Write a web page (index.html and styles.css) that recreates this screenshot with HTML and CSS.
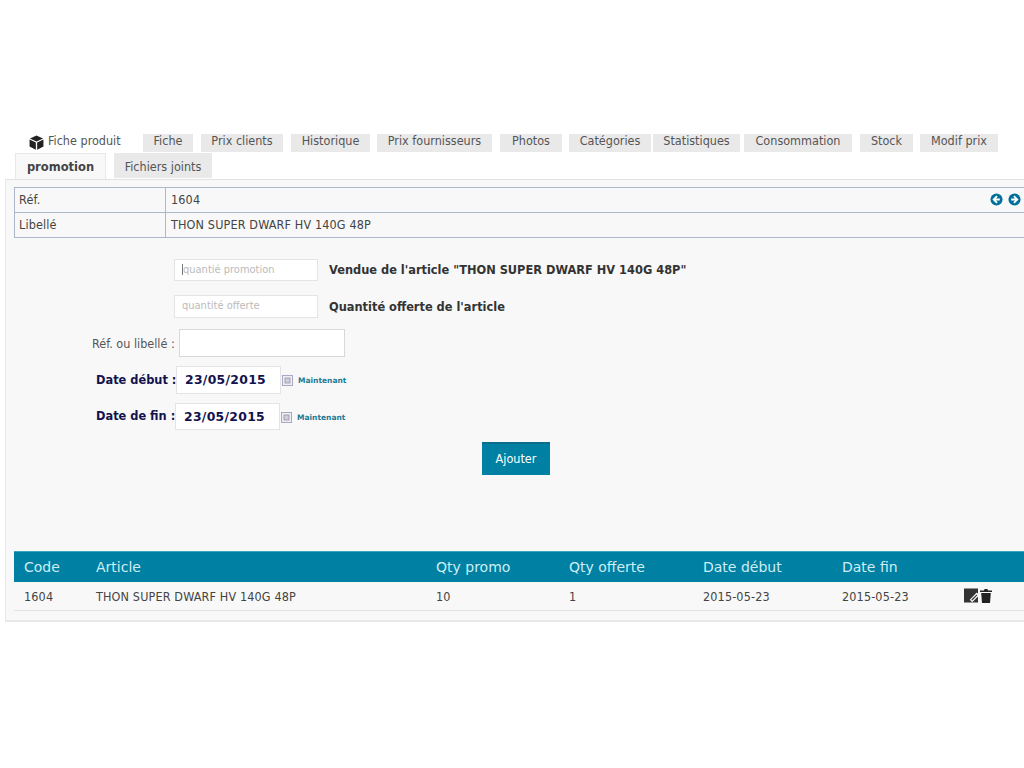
FILE: index.html
```html
<!DOCTYPE html>
<html lang="fr">
<head>
<meta charset="utf-8">
<title>Fiche produit</title>
<link rel="stylesheet" href="styles.css">
</head>
<body>
<div class="page">
  <div class="tabs">
    <div class="tab-title">
      <svg class="box" viewBox="0 0 16 16"><path d="M8 .5 15 3.6 8 6.8 1 3.6Z" fill="#222"/><path d="M.6 4.8 7.3 7.9V15.6L.6 12.2Z" fill="#222"/><path d="M15.4 4.8 8.7 7.9V15.6L15.4 12.2Z" fill="#222"/></svg>
      <span>Fiche produit</span>
    </div>
    <a class="tab t-fiche">Fiche</a>
    <a class="tab t-prix">Prix clients</a>
    <a class="tab t-hist">Historique</a>
    <a class="tab t-four">Prix fournisseurs</a>
    <a class="tab t-phot">Photos</a>
    <a class="tab t-cat">Catégories</a>
    <a class="tab t-stat">Statistiques</a>
    <a class="tab t-cons">Consommation</a>
    <a class="tab t-stock">Stock</a>
    <a class="tab t-modif">Modif prix</a>
    <div class="break"></div>
    <a class="tab-active">promotion</a>
    <a class="tab t-joint">Fichiers joints</a>
  </div>
  <div class="panel">
    <table class="info">
      <colgroup><col class="info-c1"><col></colgroup>
      <tr>
        <td>Réf.</td>
        <td>
          <div class="ref-line">
            <span>1604</span>
            <span class="arrows">
              <svg class="arrow" viewBox="0 0 14 14"><circle cx="7" cy="7" r="6.5" fill="#00709a"/><path d="M7.6 3.4 4 7l3.6 3.6M4.4 7H10.6" stroke="#fff" stroke-width="2" fill="none"/></svg>
              <svg class="arrow" viewBox="0 0 14 14"><circle cx="7" cy="7" r="6.5" fill="#00709a"/><path d="M6.4 3.4 10 7l-3.6 3.6M9.6 7H3.4" stroke="#fff" stroke-width="2" fill="none"/></svg>
            </span>
          </div>
        </td>
      </tr>
      <tr><td>Libellé</td><td class="lib-val">THON SUPER DWARF HV 140G 48P</td></tr>
    </table>

    <form class="form">
      <div class="row row-qty1">
        <input class="input input-qty input-caret" placeholder="quantié promotion">
        <strong class="qty-label">Vendue de l'article "THON SUPER DWARF HV 140G 48P"</strong>
      </div>
      <div class="row row-qty2">
        <input class="input input-qty" placeholder="quantité offerte">
        <strong class="qty-label">Quantité offerte de l'article</strong>
      </div>
      <div class="row row-ref">
        <label class="ref-label">Réf. ou libellé :</label>
        <input class="input input-ref">
      </div>
      <div class="row row-date1">
        <label class="date-label">Date début :</label>
        <input class="input input-date" value="23/05/2015">
        <svg class="cal" viewBox="0 0 11 11"><rect x=".5" y=".5" width="10" height="10" fill="#eeeef4" stroke="#a8a8c0"/><rect x="3" y="3" width="5" height="5" fill="#d0d0dc" stroke="#8888a0" stroke-width=".7"/></svg>
        <a class="now">Maintenant</a>
      </div>
      <div class="row row-date2">
        <label class="date-label">Date de fin :</label>
        <input class="input input-date" value="23/05/2015">
        <svg class="cal" viewBox="0 0 11 11"><rect x=".5" y=".5" width="10" height="10" fill="#eeeef4" stroke="#a8a8c0"/><rect x="3" y="3" width="5" height="5" fill="#d0d0dc" stroke="#8888a0" stroke-width=".7"/></svg>
        <a class="now">Maintenant</a>
      </div>
      <div class="row-btn"><button type="button" class="btn">Ajouter</button></div>
    </form>

    <table class="data">
      <colgroup>
        <col class="c-code"><col class="c-art"><col class="c-qp"><col class="c-qo"><col class="c-dd"><col class="c-df"><col class="c-act">
      </colgroup>
      <thead>
        <tr><th>Code</th><th>Article</th><th>Qty promo</th><th>Qty offerte</th><th>Date début</th><th>Date fin</th><th></th></tr>
      </thead>
      <tbody>
        <tr>
          <td>1604</td><td>THON SUPER DWARF HV 140G 48P</td><td>10</td><td>1</td><td>2015-05-23</td><td>2015-05-23</td>
          <td>
            <div class="actions">
              <svg class="act" viewBox="0 0 14 15"><rect y=".5" width="14" height="14" fill="#333"/><path d="M7 13 14 5.8" stroke="#f7f7f7" stroke-width="3.6" fill="none"/><path d="M7.8 12 13 6.8" stroke="#333" stroke-width="1.1" fill="none"/></svg>
              <svg class="trash" viewBox="0 0 12 15"><path d="M0 2.6H4L4.6 1H7.4L8 2.6H12V4H0Z" fill="#222"/><path d="M1.2 5H10.8L10 15H2Z" fill="#222"/></svg>
            </div>
          </td>
        </tr>
      </tbody>
    </table>
  </div>
</div>
</body>
</html>
```

FILE: styles.css
```css
* { box-sizing: border-box; }
html, body { margin: 0; padding: 0; background: #fff; }
body {
  width: 1024px;
  height: 768px;
  overflow: hidden;
  font-family: "DejaVu Sans Condensed", "DejaVu Sans", Verdana, sans-serif;
  font-size: 12.5px;
  color: #444;
}
.page { padding-top: 134px; }

/* tabs */
.tabs {
  display: flex;
  flex-wrap: wrap;
  padding-left: 15px;
  width: 1024px;
}
.break { flex-basis: 100%; height: 1px; }
.tab-title {
  display: flex;
  align-items: flex-start;
  gap: 4px;
  height: 18px;
  width: 128px;
  padding-left: 14px;
  line-height: 14px;
  color: #555;
  white-space: nowrap;
}
.box { width: 15px; height: 15px; margin-top: 1px; }
.tab, .tab-active { display: block; white-space: nowrap; text-align: center; }
.tab {
  height: 18px;
  line-height: 14px;
  background: #e9e9e9;
  color: #555;
}
.t-fiche { width: 50px; margin-right: 8px; }
.t-prix { width: 82px; margin-right: 8px; }
.t-hist { width: 79px; margin-right: 7px; }
.t-four { width: 115px; margin-right: 8px; }
.t-phot { width: 62px; margin-right: 7px; }
.t-cat { width: 82px; margin-right: 2px; }
.t-stat { width: 87px; margin-right: 4px; }
.t-cons { width: 108px; margin-right: 8px; }
.t-stock { width: 53px; margin-right: 7px; }
.t-modif { width: 78px; }
.tab-active {
  width: 91px;
  height: 26px;
  line-height: 27px;
  margin-right: 8px;
  background: #f8f8f8;
  border: 1px solid #e8e8e8;
  border-bottom: 0;
  color: #444;
  font-family: "DejaVu Sans", Verdana, sans-serif;
  font-weight: 700;
  font-size: 11.5px;
}
.t-joint { width: 98px; height: 25px; line-height: 27px; }

/* panel */
.panel {
  margin-left: 5px;
  width: 1040px;
  height: 443px;
  padding: 7px 0 0 8px;
  background: #f8f8f8;
  border-top: 1px solid #e2e2e2;
  border-left: 1px solid #e8e8e8;
  border-bottom: 2px solid #e8e8e8;
}

/* info table */
.info {
  width: 1012px;
  border-collapse: collapse;
  table-layout: fixed;
  letter-spacing: .14px;
}
.info-c1 { width: 151px; }
.info td {
  height: 25px;
  padding: 0 4px 2px;
  border: 1px solid #aeb6ca;
  color: #444;
}
.info .lib-val { padding-left: 5px; }
.ref-line { display: flex; justify-content: space-between; align-items: center; padding: 0 0 0 1px; }
.arrows { display: flex; gap: 5px; }
.arrow { width: 13px; height: 13px; display: block; }

/* form */
.form { height: 313px; }
.row { display: flex; align-items: center; }
.input {
  display: block;
  margin: 0;
  background-color: #fff;
  border: 1px solid #e4e4e4;
  font-family: inherit;
  outline: 0;
  border-radius: 0;
}
.input-qty { width: 144px; height: 23px; padding: 0 7px 2px; font-size: 11px; }
.input-qty::placeholder { color: #bbb; opacity: 1; }
.input-caret {
  height: 22px;
  padding-left: 8px;
  background-image: linear-gradient(#777, #777);
  background-repeat: no-repeat;
  background-size: 1px 11px;
  background-position: 7px 4px;
}
.qty-label {
  margin-left: 11px;
  font-family: "DejaVu Sans", Verdana, sans-serif;
  font-size: 11.4px;
  color: #333;
}
.row-qty1 { padding: 21px 0 0 160px; }
.row-qty2 { padding: 14px 0 0 160px; }
.row-ref { padding: 11px 0 0 78px; }
.ref-label { width: 87px; color: #555; white-space: nowrap; }
.input-ref { width: 166px; height: 28px; border-color: #d8d8d8; }
.row-date1 { padding: 9px 0 0 82px; }
.row-date2 { padding: 9px 0 0 82px; }
.date-label {
  padding-bottom: 1px;
  color: #12124e;
  font-family: "DejaVu Sans", Verdana, sans-serif;
  font-weight: 700;
  font-size: 11.4px;
  white-space: nowrap;
}
.row-date1 .date-label { width: 80px; }
.row-date2 .date-label { width: 79px; }
.input-date {
  width: 105px;
  height: 28px;
  padding: 0 8px 2px;
  color: #12124e;
  font-family: "DejaVu Sans", Verdana, sans-serif;
  font-weight: 700;
  font-size: 12.4px;
  letter-spacing: .3px;
}
.row-date2 .input-date { height: 27px; padding-bottom: 0; }
.cal { width: 11px; height: 11px; margin-left: 1px; margin-top: 1px; }
.now {
  margin-left: 5px;
  color: #1c7a94;
  font-family: "DejaVu Sans", Verdana, sans-serif;
  font-size: 7.5px;
  font-weight: 700;
  margin-top: 1px;
  white-space: nowrap;
}
.row-btn { padding: 12px 0 0 468px; }
.btn {
  display: block;
  width: 68px;
  height: 33px;
  padding: 0 0 2px;
  background: #0080a3;
  border: 0;
  border-top: 2px solid #0a6f8c;
  color: #fff;
  font-family: inherit;
  font-size: 12.5px;
}

/* data table */
.data {
  width: 1012px;
  border-collapse: collapse;
  table-layout: fixed;
}
.c-code { width: 72px; }
.c-art { width: 340px; }
.c-qp { width: 133px; }
.c-qo { width: 134px; }
.c-dd { width: 139px; }
.c-df { width: 122px; }
.c-act { width: 72px; }
.data th {
  height: 30px;
  padding: 0 0 0 10px;
  background: #0080a3;
  border-top: 1px solid #3aa3bd;
  color: #cdeef5;
  font-family: "DejaVu Sans", Verdana, sans-serif;
  font-size: 14px;
  font-weight: 400;
  text-align: left;
}
.data td {
  height: 29px;
  padding: 1px 0 0 10px;
  border-bottom: 1px solid #e2e2e2;
  color: #444;
  letter-spacing: .14px;
  white-space: nowrap;
}
.actions { display: flex; align-items: center; gap: 2px; margin-top: -1px; }
.act { display: block; width: 14px; height: 15px; }
.trash { display: block; width: 12px; height: 15px; }
```
